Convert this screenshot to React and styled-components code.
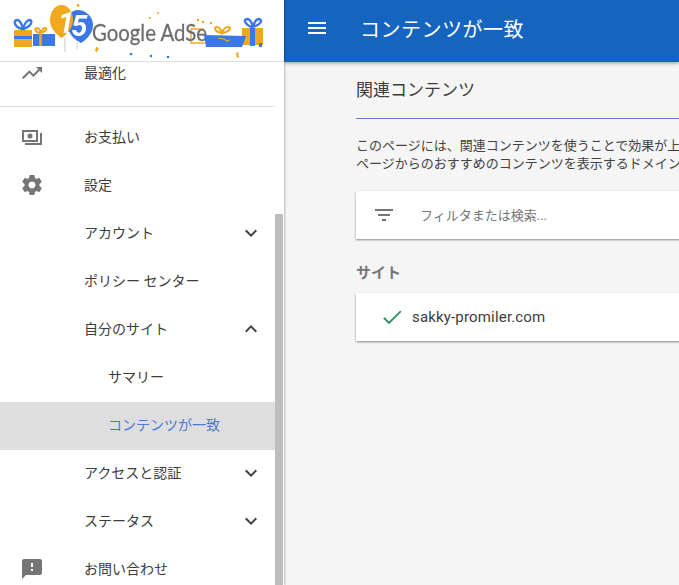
import React from 'react';
import styled, { createGlobalStyle } from 'styled-components';

const GlobalStyle = createGlobalStyle`
  html, body {
    margin: 0;
    height: 100%;
    overflow: hidden;
  }
  body {
    font-family: Roboto, "Noto Sans CJK JP", sans-serif;
    color: #3c3c3c;
  }
`;

const Page = styled.div`
  display: flex;
  width: 679px;
  height: 585px;
  overflow: hidden;
  background: #f5f5f5;
`;

const Sidebar = styled.aside`
  display: flex;
  flex-direction: column;
  flex: 0 0 284px;
  background: #fff;
  box-shadow: 1px 0 2px rgba(0, 0, 0, 0.25);
  z-index: 2;
`;

const LogoBar = styled.div`
  flex: 0 0 61px;
  height: 61px;
  border-bottom: 1px solid #e0e0e0;
  overflow: hidden;
`;

const LogoArt = styled.svg`
  display: block;
  filter: blur(0.45px);
`;

const SideBody = styled.div`
  display: flex;
  flex: 1;
  min-height: 0;
  overflow: hidden;
`;

const NavList = styled.nav`
  flex: 0 0 275px;
  margin-top: -12px;
`;

const Track = styled.div`
  flex: 0 0 8px;
`;

const Thumb = styled.div`
  margin-top: 152px;
  height: 400px;
  background: #bdbdbd;
`;

const Row = styled.div`
  display: flex;
  align-items: center;
  height: 48px;
  padding-left: ${(p) => (p.$sub ? '108px' : '20px')};
  font-size: 14px;
  color: ${(p) => (p.$active ? '#4a78d8' : '#3c3c3c')};
  background: ${(p) => (p.$active ? '#dedede' : 'transparent')};
`;

const IconSlot = styled.span`
  display: flex;
  flex: 0 0 24px;
  width: 24px;
  margin: 0 40px 2px 0;
`;

const Label = styled.span`
  flex: 1;
  padding-bottom: 4px;
  white-space: nowrap;
`;

const Chevron = styled.span`
  display: flex;
  margin: 0 12px 2px 0;
`;

const Divider = styled.hr`
  height: 1px;
  margin: 8px 0 7px;
  border: 0;
  background: #e0e0e0;
`;

const Main = styled.main`
  display: flex;
  flex-direction: column;
  flex: 1;
  min-width: 0;
`;

const TopBar = styled.header`
  display: flex;
  align-items: center;
  flex: 0 0 62px;
  padding: 0 0 6px 21px;
  box-sizing: border-box;
  color: #fff;
  background: #1565c0;
  box-shadow: 0 1px 4px rgba(0, 0, 0, 0.4);
  z-index: 1;
`;

const MenuIcon = styled.span`
  display: flex;
  margin-right: 31px;
`;

const TopTitle = styled.h1`
  margin: 0;
  font-size: 20px;
  font-weight: 400;
  letter-spacing: 0.5px;
  white-space: nowrap;
`;

const Content = styled.div`
  width: 500px;
  padding: 14px 0 0 72px;
`;

const SectionTitle = styled.h2`
  margin: 0;
  padding-bottom: 14px;
  border-bottom: 1px solid #5c80d0;
  font-size: 17px;
  line-height: 28px;
  font-weight: 400;
  color: #3c3c3c;
`;

const Intro = styled.p`
  margin: 18px 0 0;
  font-size: 13px;
  line-height: 18px;
  color: #424242;
  white-space: nowrap;
`;

const Card = styled.div`
  display: flex;
  align-items: center;
  height: 48px;
  padding-left: ${(p) => p.$pad}px;
  background: #fff;
  box-shadow: 0 1px 2px rgba(0, 0, 0, 0.45);
`;

const FilterCard = styled(Card)`
  margin-top: 18px;
`;

const FilterIcon = styled.span`
  display: flex;
  margin-right: 24px;
`;

const Placeholder = styled.span`
  padding-bottom: 2px;
  font-size: 13px;
  color: #757575;
`;

const GroupTitle = styled.h3`
  margin: 24px 0 10px;
  font-size: 15px;
  line-height: 20px;
  font-weight: 700;
  color: #757575;
`;

const CheckIcon = styled.span`
  display: flex;
  margin-right: 8px;
`;

const SiteName = styled.span`
  font-size: 15px;
  letter-spacing: 0.17px;
  color: #3c3c3c;
`;

const Icon = ({ d, size = 24, color = '#757575' }) => (
  <svg width={size} height={size} viewBox="0 0 24 24" fill={color} fillRule="evenodd">
    <path d={d} />
  </svg>
);

const paths = {
  trending: 'M16 6l2.29 2.29-4.88 4.88-4-4L2 16.59 3.41 18l6-6 4 4 6.3-6.29L22 12V6z',
  payments:
    'M2 5h16v12H2zM4 7v8h12V7zM10 8.500a2.500 2.500 0 1 1 0 5 2.500 2.500 0 0 1 0-5zM20 8h2v12H5v-2h15z',
  settings:
    'M19.43 12.98c.04-.32.07-.64.07-.98s-.03-.66-.07-.98l2.11-1.65c.19-.15.24-.42.12-.64l-2-3.46c-.12-.22-.39-.3-.61-.22l-2.49 1c-.52-.4-1.08-.73-1.69-.98l-.38-2.65C14.46 2.18 14.25 2 14 2h-4c-.25 0-.46.18-.49.42l-.38 2.65c-.61.25-1.17.59-1.69.98l-2.49-1c-.23-.09-.49 0-.61.22l-2 3.46c-.13.22-.07.49.12.64l2.11 1.65c-.04.32-.07.65-.07.98s.03.66.07.98l-2.11 1.65c-.19.15-.24.42-.12.64l2 3.46c.12.22.39.3.61.22l2.49-1c.52.4 1.08.73 1.69.98l.38 2.65c.03.24.24.42.49.42h4c.25 0 .46-.18.49-.42l.38-2.65c.61-.25 1.17-.59 1.69-.98l2.49 1c.23.09.49 0 .61-.22l2-3.46c.12-.22.07-.49-.12-.64l-2.11-1.65zM12 15.500c-1.93 0-3.500-1.570-3.500-3.500s1.570-3.500 3.500-3.500 3.500 1.570 3.500 3.500-1.570 3.500-3.500 3.500z',
  feedback:
    'M20 2H4c-1.1 0-1.99.9-1.99 2L2 22l4-4h14c1.1 0 2-.9 2-2V4c0-1.1-.9-2-2-2zm-7 12h-2v-2h2v2zm0-4h-2V6h2v4z',
  down: 'M16.59 8.59L12 13.17 7.41 8.59 6 10l6 6 6-6z',
  up: 'M12 8l-6 6 1.41 1.41L12 10.83l4.59 4.58L18 14z',
  menu: 'M3 18h18v-2H3v2zm0-5h18v-2H3v2zm0-7v2h18V6H3z',
  filter: 'M10 18h4v-2h-4v2zM3 6v2h18V6H3zm3 7h12v-2H6v2z',
  check: 'M9 16.600 4.500 12.100l-1.300 1.300L9 19.200 21.500 6.700l-1.300-1.300z',
};

const Logo = () => (
  <LogoArt width="283" height="60" viewBox="0 0 283 60">
    {/* gifts and confetti behind the wordmark */}
    <g fill="#f2a81d">
      <rect x="14" y="30" width="18" height="17" />
      <rect x="242" y="28" width="21" height="17" />
      <path d="M96 47l3 1-2 4-2-1z" />
      <path d="M236 53l2-1 1 5-2 1z" />
      <circle cx="78" cy="5.500" r="1.400" />
      <circle cx="150" cy="18" r="1" />
      <circle cx="158" cy="13" r="1" />
      <circle cx="198" cy="20" r="1.200" />
      <circle cx="203" cy="22" r="1.200" />
      <circle cx="193" cy="25" r="1" />
      <circle cx="211" cy="23" r="1.200" />
    </g>
    <g fill="#3b78e7">
      <rect x="33" y="34" width="22" height="12" />
      <rect x="250" y="28" width="5" height="18" />
      <rect x="14" y="36" width="18" height="3" />
      <rect x="259" y="43" width="3" height="4" />
      <circle cx="131" cy="54" r="1.300" />
      <circle cx="151" cy="56" r="1.300" />
      <circle cx="168" cy="57" r="1.300" />
    </g>
    <g fill="none" stroke="#3b78e7" strokeWidth="2.400">
      <path d="M22 29c-8-2-9-9-5-9 3 0 5 5 6 9 1-5 4-9 7-9 3 1 1 7-7 9z" />
      <path d="M252 27c-7-2-9-8-5-8 3 0 5 4 6 8 1-4 3-8 6-8 4 1 2 6-7 8z" />
    </g>
    <g fill="none" stroke="#f2a81d" strokeWidth="2.200">
      <path d="M40 33c-5-1-6-5-3-5 2 0 3 2 4 5 1-3 2-5 4-5 3 0 1 4-5 5z" />
      <path d="M222 33c-7-1-9-6-5-6 3 0 4 3 5 6 1-3 3-6 6-6 4 0 2 5-6 6z" />
      <path d="M204 29h-13v14h14" strokeWidth="1.400" />
      <path d="M40.500 34v12" strokeWidth="2.600" />
    </g>
    {/* balloons */}
    <path d="M65 37v15M77 42v7" stroke="#c9c9c9" strokeWidth="1" />
    <path d="M68 15c3-3 6-5 10-5 8 0 15 7 15 15 0 8-6 14-12 18-6-3-11-8-13-14z" fill="#3b78e7" />
    <path d="M50 20a11.500 15 0 1 1 23 0c0 8-6 14-11.500 18C56 34 50 28 50 20z" fill="#f2a81d" />
    <text x="58" y="33" fontFamily="Roboto, sans-serif" fontWeight="700" fontStyle="italic" fontSize="29" fill="#fff">
      1
      <tspan dx="-3" dy="3">
        5
      </tspan>
    </text>
    <text
      x="92"
      y="41"
      fontFamily="Lato, sans-serif"
      fontSize="23.500"
      fill="#6e6e6e"
      stroke="#6e6e6e"
      strokeWidth="0.300"
      textLength="115"
      lengthAdjust="spacingAndGlyphs"
    >
      Google AdSe
    </text>
    <path d="M204 35l42 1-4 11h-36z" fill="#3b78e7" />
    <path d="M218 38l6 1 3 2 3-1" fill="none" stroke="#f2a81d" strokeWidth="1.200" />
  </LogoArt>
);

const items = [
  { label: '最適化', icon: 'trending' },
  { divider: true },
  { label: 'お支払い', icon: 'payments' },
  { label: '設定', icon: 'settings' },
  { label: 'アカウント', blank: true, chevron: 'down' },
  { label: 'ポリシー センター', blank: true },
  { label: '自分のサイト', blank: true, chevron: 'up' },
  { label: 'サマリー', sub: true },
  { label: 'コンテンツが一致', sub: true, active: true },
  { label: 'アクセスと認証', blank: true, chevron: 'down' },
  { label: 'ステータス', blank: true, chevron: 'down' },
  { label: 'お問い合わせ', icon: 'feedback' },
];

export default function App() {
  return (
    <Page>
      <GlobalStyle />
      <Sidebar>
        <LogoBar>
          <Logo />
        </LogoBar>
        <SideBody>
          <NavList>
            {items.map((item, i) =>
              item.divider ? (
                <Divider key={i} />
              ) : (
                <Row key={i} $sub={item.sub} $active={item.active}>
                  {!item.sub && (
                    <IconSlot>{item.icon && <Icon d={paths[item.icon]} />}</IconSlot>
                  )}
                  <Label>{item.label}</Label>
                  {item.chevron && (
                    <Chevron>
                      <Icon d={paths[item.chevron]} color="#424242" />
                    </Chevron>
                  )}
                </Row>
              ),
            )}
          </NavList>
          <Track>
            <Thumb />
          </Track>
        </SideBody>
      </Sidebar>
      <Main>
        <TopBar>
          <MenuIcon>
            <Icon d={paths.menu} color="#fff" />
          </MenuIcon>
          <TopTitle>コンテンツが一致</TopTitle>
        </TopBar>
        <Content>
          <SectionTitle>関連コンテンツ</SectionTitle>
          <Intro>
            このページには、関連コンテンツを使うことで効果が上がる
            <br />
            ページからのおすすめのコンテンツを表示するドメインです
          </Intro>
          <FilterCard $pad={16}>
            <FilterIcon>
              <Icon d={paths.filter} />
            </FilterIcon>
            <Placeholder>フィルタまたは検索...</Placeholder>
          </FilterCard>
          <GroupTitle>サイト</GroupTitle>
          <Card $pad={24}>
            <CheckIcon>
              <Icon d={paths.check} color="#2e9560" />
            </CheckIcon>
            <SiteName>sakky-promiler.com</SiteName>
          </Card>
        </Content>
      </Main>
    </Page>
  );
}
